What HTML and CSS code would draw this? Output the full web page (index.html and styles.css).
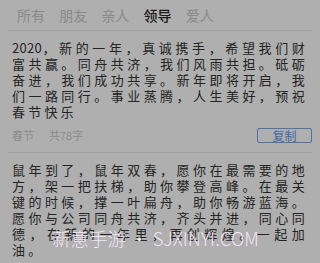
FILE: index.html
```html
<!DOCTYPE html>
<html lang="zh-CN">
<head>
<meta charset="utf-8">
<title>祝福语</title>
<link rel="stylesheet" href="styles.css">
</head>
<body>
<div class="page">
  <nav class="tabs">
    <span class="tab">所有</span>
    <span class="tab">朋友</span>
    <span class="tab">亲人</span>
    <span class="tab active">领导</span>
    <span class="tab">爱人</span>
  </nav>
  <div class="list">
    <article class="card">
      <p class="text"><span class="num">2020</span>，新的一年，真诚携手，希望我们财富共赢。同舟共济，我们风雨共担。砥砺奋进，我们成功共享。新年即将开启，我们一路同行。事业蒸腾，人生美好，预祝春节快乐</p>
      <div class="meta">
        <span class="tag">春节</span>
        <span class="count">共78字</span>
        <button class="copy" type="button">复制</button>
      </div>
    </article>
    <article class="card">
      <p class="text">鼠年到了，鼠年双春，愿你在最需要的地方，架一把扶梯，助你攀登高峰。在最关键的时候，撑一叶扁舟，助你畅游蓝海。愿你与公司同舟共济，齐头并进，同心同德，在新的一年里，再创辉煌。一起加油。</p>
    </article>
  </div>
  <div class="watermark">新意手游 • SJXINYI.COM</div>
</div>
</body>
</html>
```
FILE: styles.css
```css
html, body {
  margin: 0;
  padding: 0;
}
body {
  background: #afafaf;
  font-family: "Noto Sans CJK SC", "Noto Sans", sans-serif;
}
.page {
  position: relative;
  width: 320px;
  overflow: hidden;
}
.tabs {
  display: flex;
  align-items: center;
  height: 30px;
  margin: 0 8px;
  padding-left: 9px;
  gap: 14.2px;
  border-bottom: 1px solid #a2a2a2;
  font-size: 14px;
  line-height: 1;
  color: #8a8a8a;
}
.tab.active {
  color: #1c1c1c;
  font-weight: 500;
}
.list {
  padding: 0 8px;
}
.card {
  padding: 9px 0 9px 4px;
  border-bottom: 1px solid #a2a2a2;
}
.text {
  margin: 0 4px 0 0;
  font-size: 13px;
  line-height: 16px;
  letter-spacing: 3.2px;
  text-align: justify;
  color: #242424;
}
.num {
  letter-spacing: 0.3px;
}
.meta {
  display: flex;
  align-items: center;
  height: 15px;
  margin-top: 8px;
  font-size: 11px;
  line-height: 1;
  color: #8c8c8c;
}
.tag {
  margin-right: 15px;
}
.copy {
  margin-left: auto;
  width: 55px;
  height: 15px;
  padding: 0;
  border: 1px solid #4b74ad;
  border-radius: 2px;
  background: transparent;
  color: #3e68a6;
  font-family: inherit;
  font-size: 12px;
  line-height: 13px;
}
.watermark {
  position: absolute;
  left: 52px;
  top: 228px;
  font-size: 18.5px;
  font-weight: 300;
  line-height: 20px;
  white-space: nowrap;
  color: rgba(250, 234, 250, 0.95);
}
```
